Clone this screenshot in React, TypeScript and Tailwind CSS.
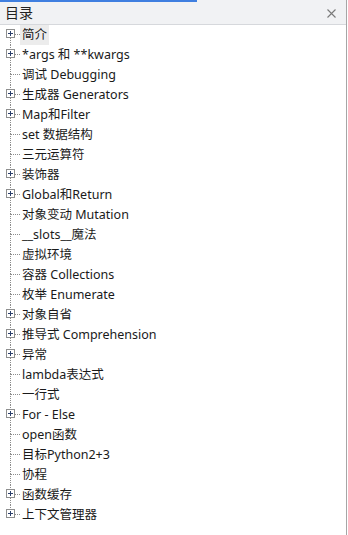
import React from "react";

interface TocItem {
  title: string;
  hasChildren: boolean;
}

const ITEMS: TocItem[] = [
  { title: "简介", hasChildren: true },
  { title: "*args 和 **kwargs", hasChildren: true },
  { title: "调试 Debugging", hasChildren: false },
  { title: "生成器 Generators", hasChildren: true },
  { title: "Map和Filter", hasChildren: true },
  { title: "set 数据结构", hasChildren: false },
  { title: "三元运算符", hasChildren: false },
  { title: "装饰器", hasChildren: true },
  { title: "Global和Return", hasChildren: true },
  { title: "对象变动 Mutation", hasChildren: false },
  { title: "__slots__魔法", hasChildren: false },
  { title: "虚拟环境", hasChildren: false },
  { title: "容器 Collections", hasChildren: false },
  { title: "枚举 Enumerate", hasChildren: false },
  { title: "对象自省", hasChildren: true },
  { title: "推导式 Comprehension", hasChildren: true },
  { title: "异常", hasChildren: true },
  { title: "lambda表达式", hasChildren: false },
  { title: "一行式", hasChildren: false },
  { title: "For - Else", hasChildren: true },
  { title: "open函数", hasChildren: false },
  { title: "目标Python2+3", hasChildren: false },
  { title: "协程", hasChildren: false },
  { title: "函数缓存", hasChildren: true },
  { title: "上下文管理器", hasChildren: true },
];

function Connector({ first, last, hasChildren }: { first: boolean; last: boolean; hasChildren: boolean }) {
  return (
    <div className="relative flex h-5 w-[20px] shrink-0">
      <div className="w-[10px] shrink-0" />
      {/* tree lines */}
      <div className="flex w-[10px] flex-col">
        <div className={`h-[9px] ${first ? "" : "border-l border-dotted border-[#8c8c8c]"}`} />
        <div
          className={`flex-1 border-t border-dotted border-[#8c8c8c] ${
            last ? "" : "border-l"
          }`}
        />
      </div>
      {/* expander box sits over the line junction */}
      {hasChildren && (
        <div className="absolute left-[6px] top-[4px] flex h-[9px] w-[9px] items-center justify-center border border-[#8e8f8f] bg-white">
          <svg width="5" height="5" viewBox="0 0 5 5">
            <rect x="0" y="2" width="5" height="1" fill="#2b3f6b" />
            <rect x="2" y="0" width="1" height="5" fill="#2b3f6b" />
          </svg>
        </div>
      )}
    </div>
  );
}

export default function App() {
  return (
    <div
      className="h-[535px] w-[347px] border-r border-[#a6a6a6] bg-white text-[#1a1a1a]"
      style={{ fontFamily: '"Noto Sans", "Noto Sans CJK SC", sans-serif' }}
    >
      {/* Header */}
      <div className="flex h-[25px] flex-col border-b border-[#d6d8dc] bg-[#f1f2f4]">
        <div className="h-[2px] w-[197px] bg-[#3f7fe0]" />
        <div className="flex flex-1 items-center justify-between pl-[5px] pr-[10px]">
          <span className="text-[14px] leading-none text-[#222]">目录</span>
          <svg width="9" height="9" viewBox="0 0 9 9">
            <path d="M0.5 0.5 L8.5 8.5 M8.5 0.5 L0.5 8.5" stroke="#7a7a7a" strokeWidth="1.1" />
          </svg>
        </div>
      </div>

      {/* Tree */}
      <ul>
        {ITEMS.map((item, i) => (
          <li key={item.title} className="flex h-5 items-center">
            <Connector first={i === 0} last={i === ITEMS.length - 1} hasChildren={item.hasChildren} />
            <span
              className={`flex h-5 items-center whitespace-nowrap px-[2px] text-[12.5px] leading-none ${
                i === 0 ? "bg-[#ececec]" : ""
              }`}
            >
              {item.title}
            </span>
          </li>
        ))}
      </ul>
    </div>
  );
}
